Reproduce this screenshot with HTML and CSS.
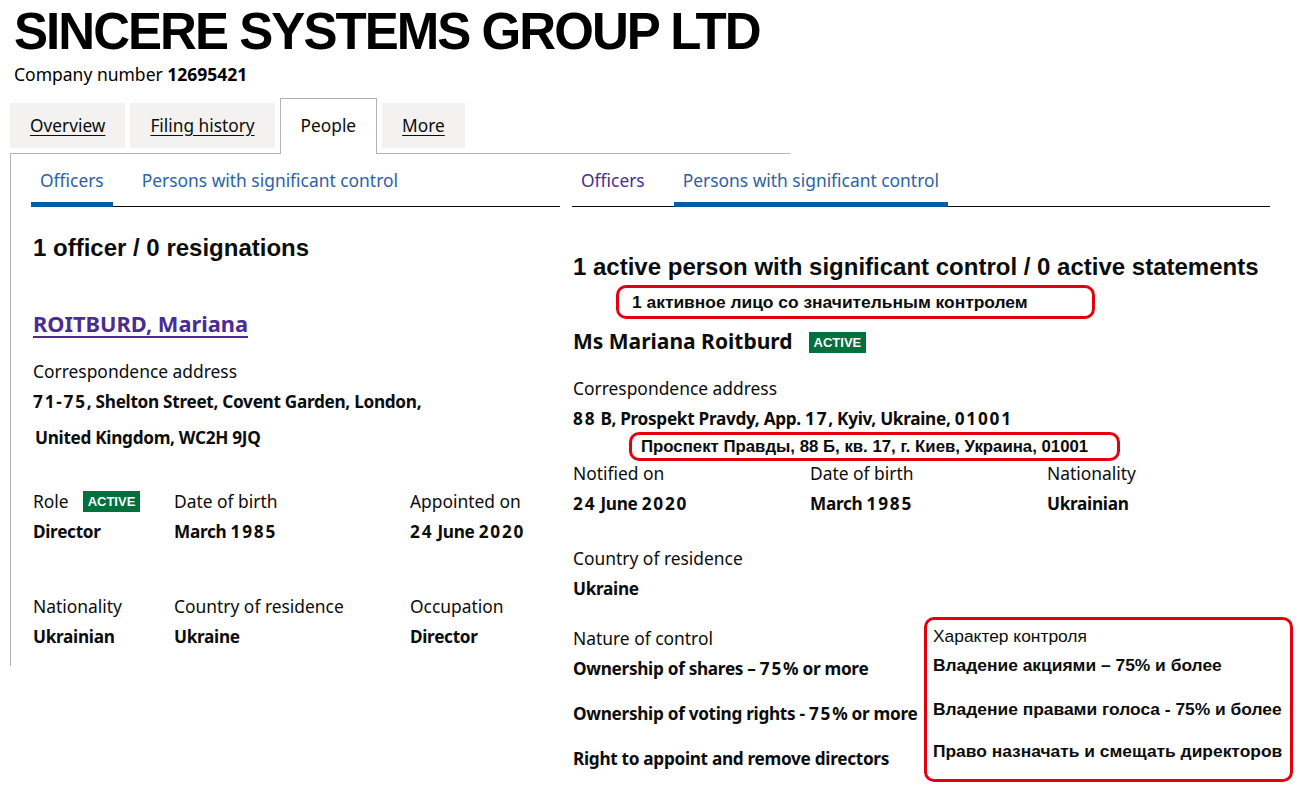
FILE: index.html
```html
<!DOCTYPE html>
<html lang="en">
<head>
<meta charset="utf-8">
<title>SINCERE SYSTEMS GROUP LTD - People</title>
<link rel="stylesheet" href="styles.css">
</head>
<body>
<header class="company-header">
  <h1 class="company-name">SINCERE SYSTEMS GROUP LTD</h1>
  <p class="company-number">Company number <strong>12695421</strong></p>
</header>
<nav class="section-tabs">
  <a class="section-tab" href="#">Overview</a>
  <a class="section-tab" href="#">Filing history</a>
  <span class="section-tab section-tab--selected">People</span>
  <a class="section-tab" href="#">More</a>
</nav>
<main class="panels">
  <section class="panel panel--officers">
    <nav class="sub-tabs">
      <a class="sub-tab sub-tab--active" href="#">Officers</a>
      <a class="sub-tab" href="#">Persons with significant control</a>
    </nav>
    <div class="panel-body">
      <h2 class="count-heading">1 officer / 0 resignations</h2>
      <h3 class="officer-name"><a href="#">ROITBURD, Mariana</a></h3>
      <div class="label label--first">Correspondence address</div>
      <div class="value"><span class="num">71-75</span>, Shelton Street, Covent Garden, London,</div>
      <div class="value address-second">United Kingdom, WC2H 9JQ</div>
      <div class="facts facts--officer">
        <div class="fact">
          <div class="label label--badge">Role <span class="badge">Active</span></div>
          <div class="value">Director</div>
        </div>
        <div class="fact">
          <div class="label">Date of birth</div>
          <div class="value">March <span class="num">1985</span></div>
        </div>
        <div class="fact">
          <div class="label">Appointed on</div>
          <div class="value"><span class="num">24</span> June <span class="num">2020</span></div>
        </div>
        <div class="fact">
          <div class="label">Nationality</div>
          <div class="value">Ukrainian</div>
        </div>
        <div class="fact">
          <div class="label">Country of residence</div>
          <div class="value">Ukraine</div>
        </div>
        <div class="fact">
          <div class="label">Occupation</div>
          <div class="value">Director</div>
        </div>
      </div>
    </div>
  </section>

  <section class="panel panel--psc">
    <nav class="sub-tabs sub-tabs--psc">
      <a class="sub-tab sub-tab--visited" href="#">Officers</a>
      <a class="sub-tab sub-tab--active" href="#">Persons with significant control</a>
    </nav>
    <div class="psc-body">
      <h2 class="count-heading count-heading--psc">1 active person with significant control / 0 active statements</h2>
      <div class="note note--count">1 активное лицо со значительным контролем</div>
      <div class="psc-name-row">
        <h3 class="psc-name">Ms Mariana Roitburd</h3>
        <span class="badge">Active</span>
      </div>
      <div class="label label--first">Correspondence address</div>
      <div class="value"><span class="num">88</span> B, Prospekt Pravdy, App. <span class="num">17</span>, Kyiv, Ukraine, <span class="num">01001</span></div>
      <div class="note note--address">Проспект Правды, 88 Б, кв. 17, г. Киев, Украина, 01001</div>
      <div class="facts facts--psc">
        <div class="fact">
          <div class="label">Notified on</div>
          <div class="value"><span class="num">24</span> June <span class="num">2020</span></div>
        </div>
        <div class="fact">
          <div class="label">Date of birth</div>
          <div class="value">March <span class="num">1985</span></div>
        </div>
        <div class="fact">
          <div class="label">Nationality</div>
          <div class="value">Ukrainian</div>
        </div>
      </div>
      <div class="residence">
        <div class="label">Country of residence</div>
        <div class="value">Ukraine</div>
      </div>
      <div class="control-row">
        <div class="control-list">
          <div class="label">Nature of control</div>
          <div class="value control-item">Ownership of shares – <span class="num">75</span>% or more</div>
          <div class="value control-item">Ownership of voting rights - <span class="num">75</span>% or more</div>
          <div class="value control-item">Right to appoint and remove directors</div>
        </div>
        <div class="note note--control">
          <div class="note-label">Характер контроля</div>
          <div class="note-item note-item--first">Владение акциями – 75% и более</div>
          <div class="note-item">Владение правами голоса - 75% и более</div>
          <div class="note-item">Право назначать и смещать директоров</div>
        </div>
      </div>
    </div>
  </section>
</main>
</body>
</html>
```

FILE: styles.css
```css
* {
  box-sizing: border-box;
}

html, body {
  margin: 0;
  padding: 0;
  background: #ffffff;
}

body {
  width: 1300px;
  height: 800px;
  overflow: hidden;
  font-family: "Noto Sans", "Open Sans", sans-serif;
  font-size: 17px;
  line-height: 25px;
  color: #0b0c0c;
}

/* header */
.company-header {
  padding: 7px 0 0 14px;
}

.company-name {
  margin: 0;
  font-family: "Liberation Sans", Arial, sans-serif;
  font-weight: 700;
  font-size: 51px;
  line-height: 50px;
  letter-spacing: -1.95px;
  color: #000000;
}

.company-number {
  margin: 5px 0 0;
  font-size: 17.5px;
  line-height: 24px;
  color: #000000;
}

.company-number strong {
  font-weight: 700;
}

/* section tabs */
.section-tabs {
  display: flex;
  align-items: flex-end;
  width: 780px;
  margin: 12px 0 0 10px;
  border-bottom: 1px solid #b1b4b6;
}

.section-tab {
  display: block;
  height: 45px;
  margin: 0 5px 5px 0;
  padding: 10px 20px;
  background: #f3f2f1;
  color: #0b0c0c;
  text-decoration: underline;
  text-underline-offset: 3px;
  font-size: 17.3px;
  line-height: 25px;
}

.section-tab--selected {
  height: 56px;
  margin-bottom: -1px;
  padding: 14px 20px 16px;
  background: #ffffff;
  border: 1px solid #b1b4b6;
  border-bottom: 0;
  text-decoration: none;
}

/* panels */
.panels {
  display: flex;
  align-items: flex-start;
}

.panel--officers {
  width: 550px;
  margin-left: 10px;
  padding: 0 0 17px 20px;
  border-left: 1px solid #b1b4b6;
}

.panel--psc {
  width: 740px;
  padding: 0 7px 0 12px;
}

/* sub tabs */
.sub-tabs {
  display: flex;
  border-bottom: 1px solid #0b0c0c;
}

.sub-tabs--psc {
  margin-right: 23px;
}

.sub-tab {
  display: block;
  margin: 0 20px -1px 0;
  padding: 14px 9px 9px;
  border-bottom: 5px solid transparent;
  color: #2b62a8;
  text-decoration: none;
  font-size: 17.4px;
  line-height: 25px;
}

.sub-tab--active {
  border-bottom-color: #005ea5;
}

.sub-tab--visited {
  color: #4c2c92;
}

/* officer panel body */
.panel-body {
  padding-left: 2px;
}

.count-heading {
  margin: 26px 0 0;
  font-family: "Liberation Sans", Arial, sans-serif;
  font-weight: 700;
  font-size: 24px;
  line-height: 30px;
  color: #0b0c0c;
}

.officer-name {
  margin: 46px 0 0;
  font-size: 21.8px;
  line-height: 30px;
  font-weight: 700;
}

.officer-name a {
  color: #4c2c92;
  text-decoration: underline;
  text-decoration-thickness: 2px;
  text-underline-offset: 4px;
}

.label {
  font-size: 17.4px;
  line-height: 25px;
  font-weight: 400;
}

.label--first {
  margin-top: 20px;
}

.value {
  margin-top: 5px;
  font-size: 17.2px;
  line-height: 25px;
  font-weight: 700;
  letter-spacing: -0.3px;
  white-space: nowrap;
}

.num {
  letter-spacing: 1.8px;
}

.address-second {
  margin: 11px 0 0 2px;
}

.label--badge {
  display: flex;
  align-items: center;
  gap: 14px;
}

.badge {
  display: inline-block;
  height: 21px;
  padding: 0 5px;
  background: #00703c;
  color: #ffffff;
  font-family: "Liberation Sans", Arial, sans-serif;
  font-weight: 700;
  font-size: 13px;
  line-height: 21px;
  letter-spacing: 0;
  text-transform: uppercase;
}

.facts {
  display: grid;
}

.facts--officer {
  margin-top: 39px;
  grid-template-columns: 141px 236px 1fr;
  row-gap: 50px;
}

.facts--psc {
  margin-top: 0;
  grid-template-columns: 237px 237px 1fr;
}

/* psc panel body */
.psc-body {
  padding-left: 1px;
}

.count-heading--psc {
  margin-top: 45px;
}

.note {
  border: 3px solid #e3000f;
  border-radius: 10px;
  font-family: "Liberation Sans", Arial, sans-serif;
  color: #0b0c0c;
  white-space: nowrap;
}

.note--count {
  width: 479px;
  height: 34px;
  margin: 3px 0 0 43px;
  padding: 0 13px;
  font-weight: 700;
  font-size: 17.4px;
  line-height: 28px;
}

.psc-name-row {
  display: flex;
  align-items: center;
  gap: 16px;
  margin-top: 7px;
}

.psc-name {
  margin: 0;
  font-size: 21px;
  line-height: 30px;
  font-weight: 700;
}

.psc-name-row .badge {
  margin-top: 3px;
}

.note--address {
  width: 491px;
  height: 29px;
  margin: 1px 0 0 56px;
  padding: 0 9px;
  font-weight: 700;
  font-size: 16.8px;
  line-height: 23px;
}

.residence {
  margin-top: 30px;
}

.control-row {
  display: flex;
  align-items: flex-start;
  margin-top: 16px;
}

.control-list {
  width: 351px;
  padding-top: 9px;
}

.control-item {
  margin-top: 20px;
}

.control-list .label + .control-item {
  margin-top: 5px;
}

.note--control {
  width: 369px;
  height: 165px;
  padding: 4px 2px 16px 6px;
}

.note-label {
  font-size: 17.4px;
  line-height: 24px;
}

.note-item {
  margin-top: 18px;
  font-weight: 700;
  font-size: 17.4px;
  line-height: 24px;
}

.note-item--first {
  margin-top: 5px;
}

.note-item--first + .note-item {
  margin-top: 20px;
}
```
